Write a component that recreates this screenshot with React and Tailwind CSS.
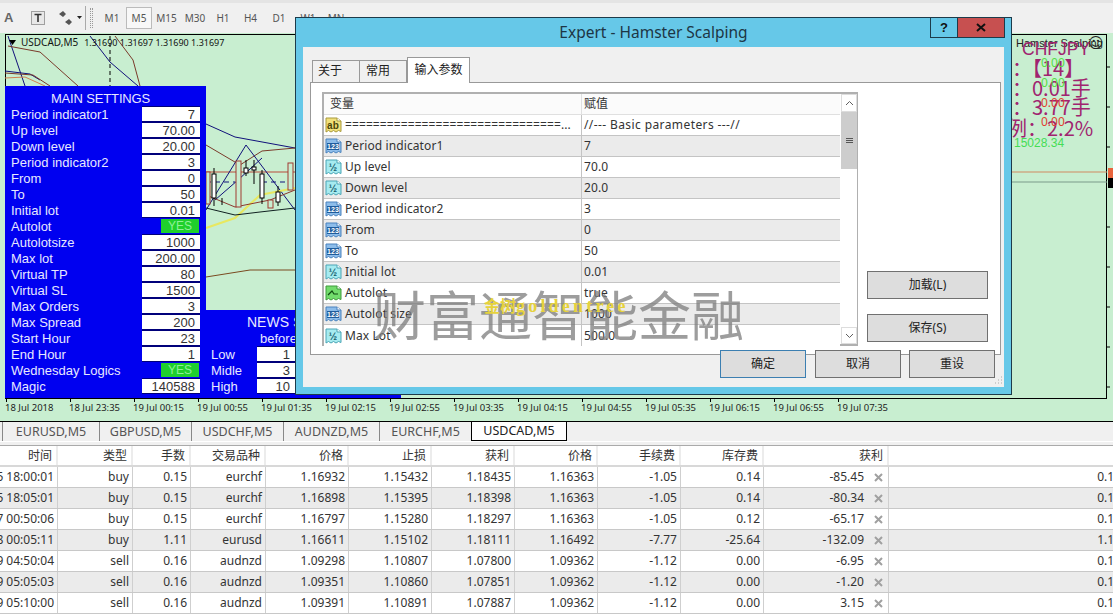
const sans = "font-['Noto_Sans','Noto_Sans_CJK_SC',sans-serif]";

const periods = [
  ["M1", "w-[28px]"], ["M5", "w-[26px]"], ["M15", "w-[29px]"], ["M30", "w-[28px]"], ["H1", "w-[28px]"],
  ["H4", "w-[27px]"], ["D1", "w-[30px]"], ["W1", "w-[28px]"], ["MN", "w-[28px]"],
];

const mainRows = [
  ["Period indicator1", "7"], ["Up level", "70.00"], ["Down level", "20.00"], ["Period indicator2", "3"],
  ["From", "0"], ["To", "50"], ["Initial lot", "0.01"], ["Autolot", "YES"], ["Autolotsize", "1000"],
  ["Max lot", "200.00"], ["Virtual TP", "80"], ["Virtual SL", "1500"], ["Max Orders", "3"], ["Max Spread", "200"],
  ["Start Hour", "23"], ["End Hour", "1"], ["Wednesday Logics", "YES"], ["Magic", "140588"],
];

const axis = ["18 Jul 2018", "18 Jul 23:35", "19 Jul 00:15", "19 Jul 00:55", "19 Jul 01:35", "19 Jul 02:15", "19 Jul 02:55",
  "19 Jul 03:35", "19 Jul 04:15", "19 Jul 04:55", "19 Jul 05:35", "19 Jul 06:15", "19 Jul 06:55", "19 Jul 07:35"];

const params = [
  ["ab", "===============================...", "//--- Basic parameters ---//"],
  ["int", "Period indicator1", "7"], ["dbl", "Up level", "70.0"], ["dbl", "Down level", "20.0"],
  ["int", "Period indicator2", "3"], ["int", "From", "0"], ["int", "To", "50"], ["dbl", "Initial lot", "0.01"],
  ["bool", "Autolot", "true"], ["int", "Autolot size", "1000"], ["dbl", "Max Lot", "500.0"],
];

const headers = ["时间", "类型", "手数", "交易品种", "价格", "止损", "获利", "价格", "手续费", "库存费", "获利", ""];
const trades = [
  ["5 18:00:01", "buy", "0.15", "eurchf", "1.16932", "1.15432", "1.18435", "1.16363", "-1.05", "0.14", "-85.45", "0.15"],
  ["5 18:05:01", "buy", "0.15", "eurchf", "1.16898", "1.15395", "1.18398", "1.16363", "-1.05", "0.14", "-80.34", "0.15"],
  ["7 00:50:06", "buy", "0.15", "eurchf", "1.16797", "1.15280", "1.18297", "1.16363", "-1.05", "0.12", "-65.17", "0.15"],
  ["8 00:05:11", "buy", "1.11", "eurusd", "1.16611", "1.15102", "1.18111", "1.16492", "-7.77", "-25.64", "-132.09", "1.11"],
  ["9 04:50:04", "sell", "0.16", "audnzd", "1.09298", "1.10807", "1.07800", "1.09362", "-1.12", "0.00", "-6.95", "0.16"],
  ["9 05:05:03", "sell", "0.16", "audnzd", "1.09351", "1.10860", "1.07851", "1.09362", "-1.12", "0.00", "-1.20", "0.16"],
  ["9 05:10:00", "sell", "0.16", "audnzd", "1.09391", "1.10891", "1.07887", "1.09362", "-1.12", "0.00", "3.15", "0.16"],
];
const gridCols = "grid grid-cols-[58px_75px_58px_75px_83px_83px_83px_83px_83px_83px_125px_236px]";

function ParamIcon({ kind }) {
  const c = {
    ab: ["#f1e07a", "#a89a3c", "#4a4408", "ab"],
    int: ["#8dbdea", "#4a82bd", "#ffffff", "123"],
    dbl: ["#a6ebf0", "#4aa5b5", "#14606e", "½"],
    bool: ["#72dc6c", "#3f9a3c", "#0f4a10", ""],
  }[kind];
  return (
    <svg width="17" height="16" viewBox="0 0 17 16" className="shrink-0">
      <path d="M1 1H12L16 4V14.5L13.5 13.5L11 15L8.5 13.5L6 15L3.5 13.5L1 15Z" fill={c[0]} stroke={c[1]} />
      <path d="M12 1V4H16" fill="#fff" stroke={c[1]} />
      {kind === "int" && <rect x="2" y="5" width="12" height="7" fill="#1f5c9c" />}
      {kind === "bool" ? (
        <path d="M3 10L7 6L9 9H13" fill="none" stroke={c[2]} strokeWidth="1.2" />
      ) : (
        <text x="8" y={kind === "int" ? 11 : 11.5} textAnchor="middle" fontSize={kind === "int" ? 7 : 10} fontWeight="700" fontFamily="Liberation Sans" fill={c[2]}>{c[3]}</text>
      )}
    </svg>
  );
}

function ChartLines() {
  return (
    <svg className="absolute left-0 top-0" width="1113" height="388" viewBox="0 33 1113 388" fill="none">
      <path d="M8 36L25 86M90 36L110 62L138 86M5 71L30 74L40 80" stroke="#10107a" />
      <path d="M8 46L40 52L78 86M115 36L133 60L140 86M5 73L33 75L50 86" stroke="#7a3a2a" />
      <path d="M5 78L25 77L45 86" stroke="#d08050" />
      <path d="M110 36V86" stroke="#000" strokeDasharray="4 3" />
      <path d="M206 124L235 137L295 148" stroke="#10107a" />
      <path d="M206 145L240 165L262 151L295 148" stroke="#7a3a2a" />
      <path d="M206 172H295" stroke="#b84a3a" />
      <path d="M206 210L246 145L295 210M215 200L238 180L262 158" stroke="#10107a" />
      <path d="M206 182H235M262 182H290" stroke="#10107a" strokeDasharray="5 4" />
      <path d="M206 228L235 218L260 195L295 188" stroke="#e8e860" strokeWidth="2" />
      <path d="M206 195L235 207L270 200L295 190" stroke="#8a3a30" />
      <path d="M206 208L235 215L260 212L295 208" stroke="#102020" />
      <path d="M206 277L250 270L295 270" stroke="#7a4a20" />
      <g stroke="#a03a30" fill="#c8eed0">
        <rect x="206" y="172" width="4" height="32" />
        <rect x="236" y="161" width="5" height="46" />
        <rect x="268" y="200" width="5" height="8" />
        <rect x="288" y="163" width="5" height="27" />
      </g>
      <g stroke="#000" fill="#fff">
        <path d="M214 168V206M222 198V205M246 160V176M254 160V184M262 170V204M278 186V206" />
        <rect x="212" y="174" width="4" height="24" />
        <rect x="244" y="168" width="4" height="5" />
        <rect x="252" y="167" width="4" height="3" />
        <rect x="260" y="174" width="4" height="24" />
        <rect x="276" y="192" width="4" height="10" />
      </g>
      <path d="M1012 172H1107" stroke="#d08a60" />
      <path d="M1012 182H1107" stroke="#7a9a8a" />
      <path d="M1107 67h3M1107 107h3M1107 147h3M1107 227h3M1107 267h3M1107 307h3M1107 347h3M1107 387h3" stroke="#000" />
      <path d="M9 40H16L12.5 45Z" fill="#000" />
    </svg>
  );
}

export default function App() {
  return (
    <div className={`relative w-[1113px] h-[614px] overflow-hidden bg-[#f0f0f0] text-[#333] ${sans}`}>
      {/* toolbar */}
      <div className="h-[33px] flex items-center border-t-[3px] border-[#e4e4e4] pl-[4px]">
        <span className="w-[26px] font-['Liberation_Sans',sans-serif] text-[13px] font-bold text-[#666]">A</span>
        <svg width="16" height="16" viewBox="0 0 16 16" className="mr-[12px]">
          <rect x="1.5" y="1.5" width="13" height="13" fill="#e8e8e8" stroke="#555" strokeDasharray="1 1" />
          <path d="M4.5 4.5H11.5M8 4.5V12" stroke="#333" strokeWidth="1.6" />
        </svg>
        <svg width="24" height="16" viewBox="0 0 24 16">
          <path d="M1 4L5 1L8 4L5 7ZM7 12L11 9L14 12L11 15Z" fill="#555" />
          <path d="M19 6H24L21.5 9Z" fill="#222" />
        </svg>
        <div className="ml-[3px] mr-[3px] w-px h-[24px] bg-[#aaa]" />
        <div className="ml-[1px] mr-[5px] h-[20px] w-[3px] border-x border-dotted border-[#999]" />
        {periods.map(([p, w]) => (
          <div key={p} className={`${w} h-[22px] flex items-center justify-center text-[10px] text-[#555] ${p === "M5" ? "bg-[#f8f8f8] border border-[#bbb]" : ""}`}>{p}</div>
        ))}
      </div>

      {/* chart */}
      <div className="relative h-[389px] bg-[#c8eed0] border-b border-black pt-px">
        <div className="ml-[5px] w-[1102px] h-[365px] border border-black" />
        <div className="flex pl-[5px]">
          {axis.map((t) => (
            <div key={t} className="relative w-[64px] h-[22px] shrink-0">
              <div className="absolute left-px top-0 w-px h-[3px] bg-black" />
              <span className="block pt-[2px] text-[9.5px] leading-[14px] text-[#222] whitespace-nowrap">{t}</span>
            </div>
          ))}
        </div>

        <ChartLines />

        <div className="absolute left-[21px] top-[2px] text-[10px] leading-[14px] text-[#111] whitespace-nowrap">
          USDCAD,M5<span className="ml-[6px] text-[9px]">1.31690 1.31697 1.31690 1.31697</span>
        </div>

        {/* main settings */}
        <div className="absolute left-[5px] top-[53px] w-[201px] h-[312px] bg-[#0000f0] px-[6px] font-['Liberation_Sans',sans-serif] text-[13px] text-[#e8e8ff]">
          <div className="h-[20px] pr-[10px] pt-[5px] text-center leading-[16px] tracking-[-0.15px]">MAIN SETTINGS</div>
          {mainRows.map(([l, v]) => (
            <div key={l} className="h-[16px] flex items-center justify-between">
              <span className="leading-[16px] pt-px whitespace-nowrap">{l}</span>
              {v === "YES" ? (
                <div className="w-[38px] h-[14px] mr-px bg-[#1fd02c] text-[#8ff09a] text-center text-[12px] leading-[15px]">YES</div>
              ) : (
                <div className="w-[58px] h-[16px] bg-white border-y border-[#00007a] pr-[5px] text-right text-[#333] leading-[15px]">{v}</div>
              )}
            </div>
          ))}
        </div>

        {/* news settings */}
        <div className="absolute left-[206px] top-[277px] w-[195px] h-[88px] bg-[#0000f0] font-['Liberation_Sans',sans-serif] text-[13px] text-[#e8e8ff]">
          <div className="h-[20px] pl-[41px] pt-[4px] leading-[16px] text-[14px] whitespace-nowrap">NEWS SETTINGS</div>
          <div className="h-[16px] pl-[54px] pt-px leading-[16px]">before</div>
          {[["Low", "1"], ["Midle", "3"], ["High", "10"]].map(([l, v]) => (
            <div key={l} className="h-[16px] flex items-center pl-[5px]">
              <span className="w-[46px] pt-px leading-[16px]">{l}</span>
              <div className="w-[38px] h-[16px] bg-white border-y border-[#00007a] pr-[5px] text-right text-[#333] leading-[15px]">{v}</div>
            </div>
          ))}
        </div>

        {/* right-hand labels */}
        <div className="absolute left-[1016px] top-[3px] text-[11px] leading-[14px] text-[#222] whitespace-nowrap font-['Liberation_Sans',sans-serif]">Hamster Scalping</div>
        <div className="absolute left-[1088px] top-[0px] text-[15px] leading-[20px] text-[#222] font-['DejaVu_Sans',sans-serif]">☺</div>
        <div className="absolute left-[1022px] top-[4px] text-[17.5px] leading-[24px] text-[#a0246f] whitespace-nowrap font-['Liberation_Sans',sans-serif]">CHFJPY</div>
        <div className="absolute left-[1012px] top-[23px] text-[20px] leading-[24px] text-[#a0246f] whitespace-nowrap font-['Noto_Sans_CJK_SC',sans-serif]">：【14】</div>
        <div className="absolute left-[1012px] top-[43px] text-[20px] leading-[24px] text-[#a0246f] whitespace-nowrap font-['Noto_Sans_CJK_SC',sans-serif]">：0.01手</div>
        <div className="absolute left-[1012px] top-[62px] text-[20px] leading-[24px] text-[#a0246f] whitespace-nowrap font-['Noto_Sans_CJK_SC',sans-serif]">：3.77手</div>
        <div className="absolute left-[1007px] top-[83px] text-[20px] leading-[24px] text-[#a0246f] whitespace-nowrap font-['Noto_Sans_CJK_SC',sans-serif]">例：2.2%</div>
        <div className="absolute left-[1041px] top-[23px] text-[12px] leading-[14px] text-[#55dd44]">0.00</div>
        <div className="absolute left-[1041px] top-[43px] text-[12px] leading-[14px] text-[#55dd44]">0.00</div>
        <div className="absolute left-[1041px] top-[63px] text-[12px] leading-[14px] text-[#e04030]">0.00</div>
        <div className="absolute left-[1041px] top-[82px] text-[12px] leading-[14px] text-[#e04030]">0.00</div>
        <div className="absolute left-[1014px] top-[103px] text-[12px] leading-[14px] text-[#44dd55] font-['Liberation_Sans',sans-serif]">15028.34</div>
        <div className="absolute left-[1108px] top-[135px] w-[5px] h-[10px] bg-[#e8643c]" />
        <div className="absolute left-[1108px] top-[145px] w-[5px] h-[10px] bg-black" />
      </div>

      {/* symbol tabs */}
      <div className="h-[19px] flex items-stretch pl-[2px] text-[12.5px] text-[#555] bg-[#f0f0f0]">
        {["EURUSD,M5", "GBPUSD,M5", "USDCHF,M5", "AUDNZD,M5", "EURCHF,M5"].map((t, i) => (
          <div key={t} className={`flex items-center justify-center leading-[16px] border-l border-[#888] ${["w-[97px]", "w-[92px]", "w-[92px]", "w-[96px]", "w-[92px]"][i]}`}>{t}</div>
        ))}
        <div className="w-[96px] -mt-px bg-white border border-t-0 border-black flex items-center justify-center leading-[16px] text-[#222]">USDCAD,M5</div>
      </div>
      <div className="h-[5px] border-t border-white border-b border-b-[#aaa]" />

      {/* trades */}
      <div className="w-[1113px] overflow-hidden bg-white text-[12px] text-[#333]">
        <div className={`${gridCols} h-[21px] border-b-2 border-[#d8d8d8]`}>
          {headers.map((h, i) => (
            <div key={i} className="flex items-center justify-end pr-[4px] bg-white border-r-2 border-[#ececec] text-[12px] leading-[16px]">{h}</div>
          ))}
        </div>
        {trades.map((row, r) => (
          <div key={r} className={`${gridCols} h-[21px] border-b border-[#c8c8c8] ${r % 2 ? "bg-[#ebebeb]" : "bg-white"}`}>
            {row.map((c, i) => (
              <div key={i} className={`relative flex items-center justify-end overflow-hidden whitespace-nowrap leading-[16px] border-r border-[#cfcfcf] ${i === 10 ? "pr-[24px]" : "pr-[3px]"}`}>
                {c}
                {i === 10 && (
                  <svg width="9" height="9" viewBox="0 0 9 9" className="absolute right-[5px] top-[6px]">
                    <path d="M1 1L8 8M8 1L1 8" stroke="#a0a0a0" strokeWidth="2" />
                  </svg>
                )}
              </div>
            ))}
          </div>
        ))}
      </div>

      {/* expert dialog */}
      <div className="absolute left-[295px] top-[17px] w-[717px] h-[378px] bg-[#66c8e8] border border-[#1d3b4a] px-[7px] pb-[7px] flex flex-col">
        <div className="relative h-[29px] shrink-0 flex items-center justify-center text-[15.5px] text-[#1d3645]">
          Expert - Hamster Scalping
          <div className="absolute right-[-1px] top-0 flex">
            <div className="w-[28px] h-[20px] border border-t-0 border-[#1d3b4a] flex items-center justify-center text-[13px] font-bold text-[#111] font-['Liberation_Sans',sans-serif]">?</div>
            <div className="w-[47px] h-[20px] bg-[#c75050] border border-t-0 border-l-0 border-[#1d3b4a] flex items-center justify-center">
              <svg width="10" height="9" viewBox="0 0 10 9"><path d="M1 1L9 8M9 1L1 8" stroke="#111" strokeWidth="2" /></svg>
            </div>
          </div>
        </div>
        <div className="relative flex-1 bg-[#f0f0f0] px-[7px] flex flex-col">
          {/* tabs */}
          <div className="h-[35px] shrink-0 flex items-end pl-[2px] text-[12px] text-[#222]">
            <div className="w-[48px] h-[22px] pl-[5px] pb-px border border-b-0 border-[#999] flex items-center leading-[16px]">关于</div>
            <div className="w-[47px] h-[22px] pl-[6px] pb-px border border-b-0 border-l-0 border-[#999] flex items-center leading-[16px]">常用</div>
            <div className="relative z-10 -mb-px w-[63px] h-[26px] pb-px bg-white border border-b-0 border-[#999] flex items-center justify-center leading-[16px]">输入参数</div>
          </div>
          {/* tab panel */}
          <div className="relative h-[273px] shrink-0 bg-white border border-[#999] mr-[-4px] pl-[11px] pt-[9px] flex gap-[9px]">
            <div className="w-[536px] h-[254px] shrink-0 border-2 border-[#b0b0b0] flex">
              <div className="w-[516px] shrink-0 text-[12px] text-[#333] tracking-[0.1px]">
                <div className="h-[21px] flex bg-[#fbfbfb] border-b border-[#e0e0e0]">
                  <div className="w-[258px] shrink-0 pl-[6px] flex items-center leading-[16px] border-r border-[#e0e0e0]">变量</div>
                  <div className="pl-[2px] flex items-center leading-[16px]">赋值</div>
                </div>
                {params.map(([k, n, v], i) => (
                  <div key={n} className={`h-[21px] flex border-b border-[#c4c4c4] last:border-b-0 ${i % 2 ? "bg-[#ebebeb]" : "bg-white"}`}>
                    <div className="w-[258px] shrink-0 pl-[1px] flex items-center gap-[3px] border-r border-[#c4c4c4] whitespace-nowrap overflow-hidden">
                      <ParamIcon kind={k} />
                      <span className="leading-[16px]">{n}</span>
                    </div>
                    <div className={`pl-[2px] flex items-center leading-[16px] whitespace-nowrap ${i === 0 ? "tracking-[0.4px]" : ""}`}>{v}</div>
                  </div>
                ))}
              </div>
              <div className="w-[16px] ml-px shrink-0 flex flex-col bg-white">
                <div className="h-[18px] flex items-center justify-center border border-[#ddd]">
                  <svg width="9" height="6" viewBox="0 0 9 6"><path d="M1 5L4.5 1.5L8 5" fill="none" stroke="#606060" /></svg>
                </div>
                <div className="h-[57px] bg-[#cdcdcd] flex flex-col items-center justify-center gap-[1px]">
                  <div className="w-[7px] h-px bg-[#555]" />
                  <div className="w-[7px] h-px bg-[#555]" />
                  <div className="w-[7px] h-px bg-[#555]" />
                </div>
                <div className="flex-1" />
                <div className="h-[17px] flex items-center justify-center border border-[#ddd]">
                  <svg width="9" height="6" viewBox="0 0 9 6"><path d="M1 1L4.5 4.5L8 1" fill="none" stroke="#606060" /></svg>
                </div>
              </div>
            </div>
            <div className="w-[121px] pt-[179px] flex flex-col gap-[15px]">
              <div className="h-[28px] bg-[#dddddd] border border-[#707070] flex items-center justify-center text-[12px] text-[#222]">加载(L)</div>
              <div className="h-[28px] bg-[#dddddd] border border-[#707070] flex items-center justify-center text-[12px] text-[#222]">保存(S)</div>
            </div>
          </div>
          {/* footer buttons */}
          <div className="relative z-10 -mt-[5px] flex justify-end gap-[8px] pr-[2px]">
            <div className="w-[86px] h-[28px] mr-px bg-[#dddddd] border border-[#3c7fb1] flex items-center justify-center text-[12px] text-[#222]">确定</div>
            <div className="w-[86px] h-[28px] bg-[#dddddd] border border-[#707070] flex items-center justify-center text-[12px] text-[#222]">取消</div>
            <div className="w-[86px] h-[28px] bg-[#dddddd] border border-[#707070] flex items-center justify-center text-[12px] text-[#222]">重设</div>
          </div>
          <svg width="10" height="10" viewBox="0 0 10 10" className="absolute right-[1px] bottom-[1px]">
            <path d="M8 1h1M5 4h1M8 4h1M2 7h1M5 7h1M8 7h1" stroke="#aaa" />
          </svg>
        </div>
      </div>

      {/* watermarks */}
      <div className="absolute left-[373px] top-[279px] text-[53px] leading-[68px] text-[#7c7c7c]/75 whitespace-nowrap font-['Noto_Sans_CJK_SC',sans-serif]">财富通智能金融</div>
      <div className="absolute left-[484px] top-[295px] text-[16px] leading-[22px] font-bold text-[#e6d23c] whitespace-nowrap font-['Liberation_Serif','Noto_Sans_CJK_SC',serif]">金树<span className="text-[18px] tracking-[3.2px]">goldentree</span></div>
    </div>
  );
}
